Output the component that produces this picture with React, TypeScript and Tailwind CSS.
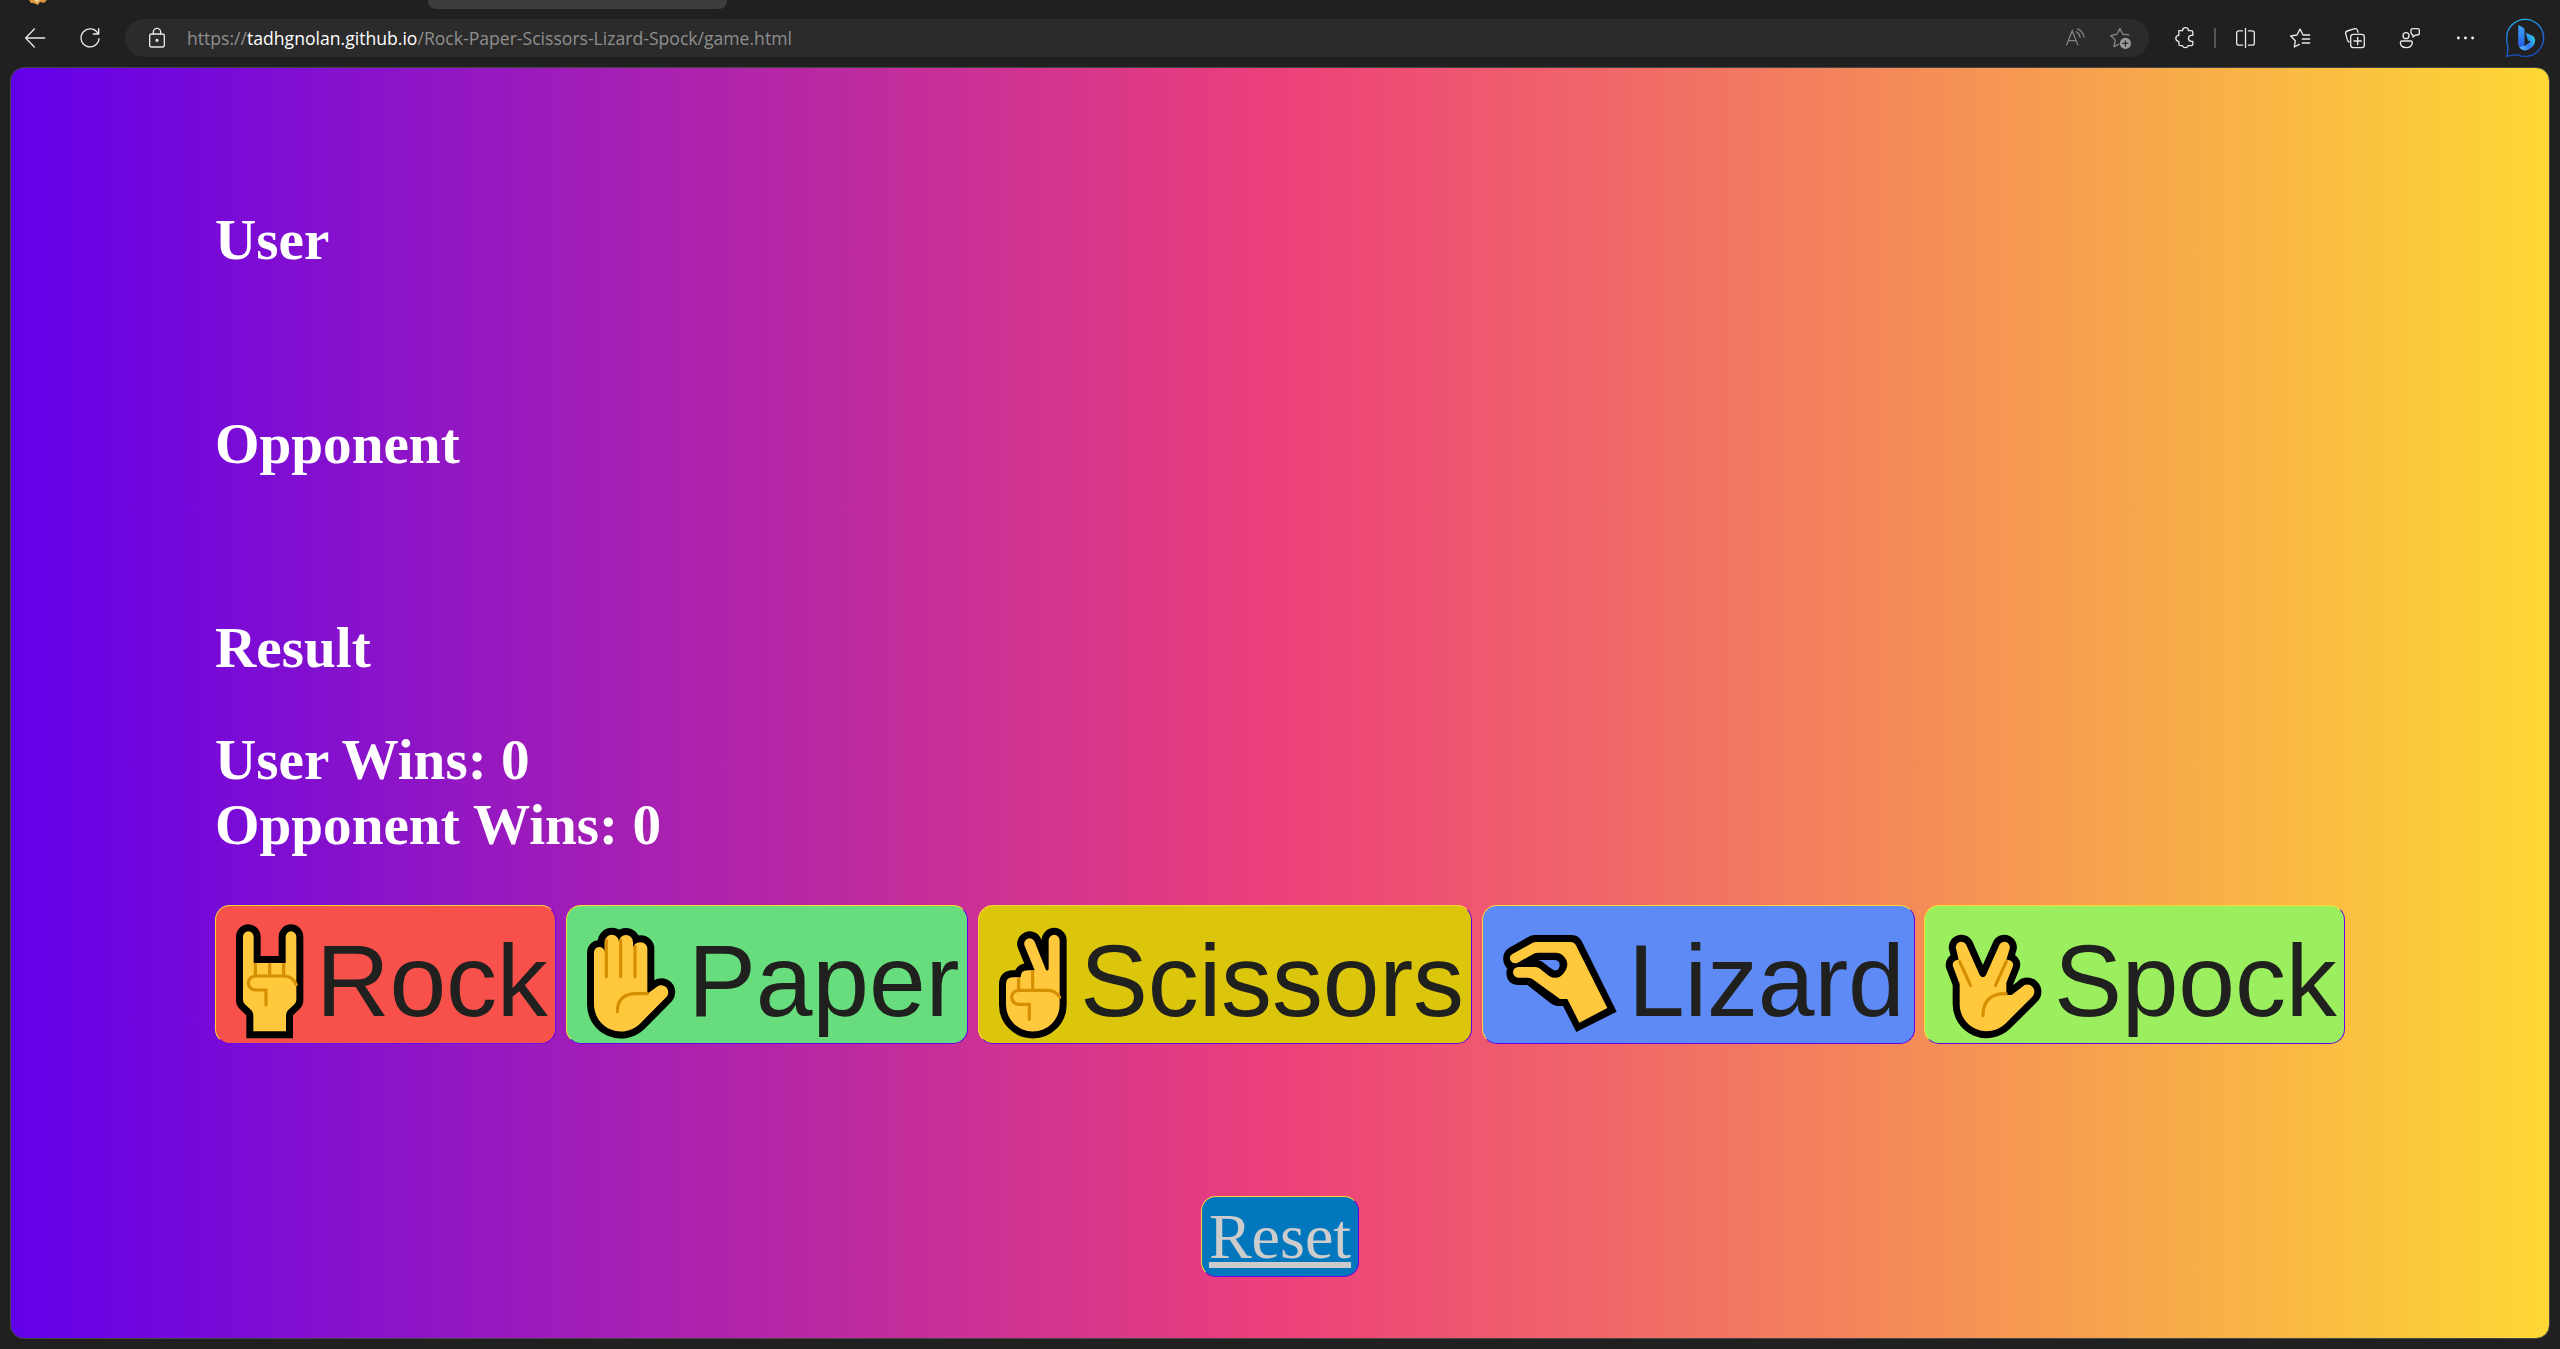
import React from "react";

type IconProps = { children: React.ReactNode; viewBox: string; className: string };

function Glyph({ children, viewBox, className }: IconProps) {
  return (
    <svg
      viewBox={viewBox}
      className={className}
      fill="none"
      stroke="#e8e8e8"
      strokeWidth="4"
      strokeLinecap="round"
      strokeLinejoin="round"
      overflow="visible"
    >
      {children}
    </svg>
  );
}

const outline = {
  fill: "#ffc83d",
  stroke: "#000",
  strokeWidth: 42,
  style: { paintOrder: "stroke" as const },
};
const crease = { fill: "none", stroke: "#d68f00", strokeWidth: 9.5, strokeLinecap: "round" as const };

function RockHand() {
  return (
    <svg viewBox="48 48 300 411" className="h-[137px] w-[100px] shrink-0 overflow-visible">
      <path
        {...outline}
        d="M129 140a16 16 0 0 1 32 0V219H257V140a16 16 0 0 1 32 0V330Q289 337 284 342L264 361Q258 367 258 375V424H160V375Q160 367 154 361L134 342Q129 337 129 330Z"
      />
      <path {...crease} strokeLinecap="butt" d="M166 220V256M209 220V256M251 220V256" />
      <path {...crease} d="M198 345V300H166a21 21 0 0 1 0-42H252Q278 259 289 284" />
    </svg>
  );
}

function PaperHand() {
  return (
    <svg viewBox="21 48 363 411" className="h-[137px] w-[121px] shrink-0 overflow-visible">
      <path
        {...outline}
        strokeLinejoin="round"
        d="M102 188a16 16 0 0 1 32-2V156a21 21 0 0 1 43 0 21 21 0 0 1 42 0V174a21 18 0 0 1 43 2V311L291 290a21 21 0 0 1 29 30L240 401A81 81 0 0 1 102 342Z"
      />
      <path {...crease} d="M139 150V260M182 150V260M225 170V260M262 311H224Q172 314 172 365" />
    </svg>
  );
}

function ScissorsHand() {
  return (
    <svg viewBox="27 48 303 411" className="h-[137px] w-[101px] shrink-0 overflow-visible">
      <path
        {...outline}
        strokeLinejoin="round"
        d="M108 282Q108 262 128 262H152Q152 241 172 241H194L164 168a16 16 0 0 1 30-13L227 238Q231 245 236 238V151a16.500 16.500 0 0 1 33 0V344A80 80 0 0 1 108 344Z"
      />
      <path {...crease} strokeLinecap="butt" d="M146 262V300M188 241V300" />
      <path {...crease} d="M178 388V343H146a21 21 0 0 1 0-42H236Q258 302 269 322" />
    </svg>
  );
}

function LizardHand() {
  return (
    <svg viewBox="39 48 435 411" className="h-[137px] w-[145px] shrink-0 overflow-visible">
      <path
        fill="#000"
        d="M115 175L176 140Q184 135 193 135H306Q325 135 335 153L440 365L319 426L279 348H262Q252 347 244 341L172 285H142Q110 282 109 249Q109 240 112 236C93 215 97 188 115 175Z"
      />
      <path
        fill="#ffc83d"
        d="M126 193L187 159Q193 156 199 156H303Q313 156 317 164L412 354L328 398L292 327H270L188 268Q182 263 174 263H145a16 16 0 0 1 0-32H195Q204 231 211 237L236 257Q262 273 281 250Q302 221 283 201Q273 188 256 188H205Q196 188 190 192L143 218Q130 223 122 212Q116 199 126 193Z"
      />
      <path
        fill="#5e8af6"
        d="M202 210H255Q269 211 269 226Q268 244 252 241L238 232L217 215Q209 210 202 210Z"
      />
    </svg>
  );
}

function SpockHand() {
  return (
    <svg viewBox="45 48 387 411" className="h-[137px] w-[129px] shrink-0 overflow-visible">
      <path
        {...outline}
        strokeLinejoin="round"
        d="M130 232C124 219 134 209 146 209L139 179a16 16 0 0 1 30-14L209 255Q219 269 228 255L268 165a16 16 0 0 1 30 14L289 209C305 209 313 219 308 231L289 278V314Q296 316 306 314L337 290a21 21 0 0 1 30 30L286 401A81 81 0 0 1 149 342V282Z"
      />
      <path {...crease} d="M149 215L182 287M289 215L256 287M288 311Q219 310 219 377" />
    </svg>
  );
}

const choices = [
  { name: "Rock", Hand: RockHand, box: "w-[341px] bg-[#f8514b]" },
  { name: "Paper", Hand: PaperHand, box: "ml-[10px] w-[402px] bg-[#68dd7d]" },
  { name: "Scissors", Hand: ScissorsHand, box: "ml-[10px] w-[494px] bg-[#dcc60b]" },
  { name: "Lizard", Hand: LizardHand, box: "ml-[10px] w-[433px] bg-[#5e8af6]" },
  { name: "Spock", Hand: SpockHand, box: "ml-[9px] w-[421px] bg-[#9bee5e]" },
];

function Toolbar() {
  return (
    <header className="flex h-[67px] flex-col overflow-hidden bg-[#202020]">
      <div className="flex h-[19px] items-start">
        <svg viewBox="0 0 20 5" className="ml-[28px] h-[5px] w-[20px]">
          <path d="M1 0H19L16 3L12 2L10 5L5 3L3 3Z" fill="#d9943c" />
          <path d="M6 0H12L9 3Z" fill="#f5d49a" />
        </svg>
        <div className="ml-[380px] h-[9px] w-[299px] rounded-b-lg bg-[#3d3d3d]" />
      </div>
      <div className="flex h-[38px] items-center">
        <Glyph viewBox="0 0 60 60" className="ml-[25px] h-[20px] w-[20px]">
          <path d="M59 30H2M28 3L2 30L28 57" />
        </Glyph>
        <Glyph viewBox="0 0 60 60" className="ml-[35px] h-[20px] w-[20px]">
          <path d="M54 17A27 27 0 1 0 57 32M56 2V18H40" />
        </Glyph>
        <div className="ml-[25px] flex h-[38px] w-[2024px] items-center rounded-full bg-[#2b2b2b]">
          <Glyph viewBox="0 0 48 60" className="ml-[24px] h-[20px] w-[16px]">
            <rect x="2" y="18" width="44" height="39" rx="6" />
            <path d="M13 18V12a11 11 0 0 1 22 0V18" />
            <circle cx="24" cy="37" r="3" fill="#e8e8e8" />
          </Glyph>
          <div className="ml-[22px] whitespace-nowrap font-['Open_Sans',sans-serif] text-[17.6px] leading-[38px] text-[#8f8f8f]">
            https://<span className="text-white">tadhgnolan.github.io</span>
            /Rock-Paper-Scissors-Lizard-Spock/game.html
          </div>
          <div className="ml-auto flex items-center gap-[25px] pr-[18px]">
            <svg viewBox="78 83 58 60" className="h-[20px] w-[19px] overflow-visible" fill="none" stroke="#858585" strokeWidth="4" strokeLinecap="round">
              <path d="M80 134L97 91L114 134M86 121H108M109 94Q119 99 121 110M113 85Q130 92 133 110" />
            </svg>
            <svg viewBox="210 83 64 64" className="h-[21px] w-[21px] overflow-visible" fill="none" stroke="#858585" strokeWidth="4" strokeLinejoin="round" strokeLinecap="round">
              <path d="M268 104L249 102L240 85L231 102L212 106L226 120L222 140L236 133" />
              <circle cx="257" cy="130" r="17" fill="#9a9a9a" stroke="none" />
              <path d="M257 122V138M249 130H265" stroke="#2b2b2b" />
            </svg>
          </div>
        </div>
        <Glyph viewBox="405 83 56 60" className="ml-[26px] h-[20px] w-[19px]">
          <path d="M416 91H427a9 9 0 0 1 18 0H453Q458 91 458 96V105H454a9 9 0 0 0 0 18H458V131Q458 136 453 136H444a9 9 0 0 1-17 0H421Q416 136 416 131V123a9 9 0 0 1 0-18V96Q416 91 416 91Z" />
        </Glyph>
        <div className="ml-[20px] h-[20px] w-[2px] bg-[#555]" />
        <Glyph viewBox="586 83 58 60" className="ml-[20px] h-[20px] w-[19px]">
          <path d="M606 91H595Q588 91 588 98V128Q588 135 595 135H606M624 91H635Q642 91 642 98V128Q642 135 635 135H624M615 84V142" />
        </Glyph>
        <Glyph viewBox="750 83 60 60" className="ml-[35px] h-[20px] w-[20px]">
          <path d="M808 104H789L780 86L771 104L752 107L766 121L763 140L778 132M787 116H809M787 128H809M793 104H809" />
        </Glyph>
        <Glyph viewBox="915 83 60 60" className="ml-[35px] h-[20px] w-[20px]">
          <path d="M927 125Q924 124 922 118L917 100Q916 94 922 92L944 85Q950 84 952 89L954 96" />
          <rect x="932" y="102" width="41" height="40" rx="8" />
          <path d="M953 111V133M942 122H964" />
        </Glyph>
        <Glyph viewBox="1080 83 60 60" className="ml-[35px] h-[20px] w-[20px]">
          <circle cx="1098" cy="106" r="9" />
          <path d="M1086 122H1112Q1117 122 1117 127Q1115 142 1099 142Q1082 142 1081 127Q1081 122 1086 122ZM1119 85H1133Q1138 85 1138 90V98Q1138 104 1132 104H1127L1119 110V104Q1113 102 1113 97V90Q1113 85 1119 85Z" />
        </Glyph>
        <svg viewBox="1250 108 50 10" className="ml-[37px] h-[4px] w-[17px] overflow-visible" fill="#f4f4f4">
          <circle cx="1254" cy="113" r="4.200" />
          <circle cx="1275" cy="113" r="4.200" />
          <circle cx="1296" cy="113" r="4.200" />
        </svg>
        <svg viewBox="1397 57 115 115" className="ml-[32px] h-[38px] w-[38px] overflow-visible">
          <defs>
            <linearGradient id="bubble" x1="0" y1="0" x2="0.300" y2="1">
              <stop offset="0" stopColor="#22c7ee" />
              <stop offset="0.400" stopColor="#2680ec" />
              <stop offset="1" stopColor="#184fc4" />
            </linearGradient>
            <linearGradient id="stem" x1="0" y1="0" x2="0" y2="1">
              <stop offset="0" stopColor="#3aa8f5" />
              <stop offset="1" stopColor="#285cec" />
            </linearGradient>
            <linearGradient id="bowl" x1="0" y1="0.700" x2="1" y2="0.200">
              <stop offset="0" stopColor="#56b4ff" />
              <stop offset="0.500" stopColor="#2f7af0" />
              <stop offset="1" stopColor="#27d8e4" />
            </linearGradient>
          </defs>
          <path d="M1399 170Q1404 155 1402 137Q1399 126 1399 114A56 56 0 1 1 1455 170Q1444 170 1434 166Q1420 164 1399 170Z" fill="none" stroke="url(#bubble)" strokeWidth="4" />
          <path d="M1456 98L1476 107Q1485 112 1485 122C1485 139 1467 152 1453 152Q1436 150 1435 132L1454 138L1472 126L1463 121Z" fill="url(#bowl)" />
          <path d="M1434 75L1448 82Q1453 85 1453 91V133Q1448 142 1441 142Q1434 140 1434 130Z" fill="url(#stem)" />
        </svg>
      </div>
    </header>
  );
}

export default function App() {
  return (
    <div className="h-[1349px] w-[2560px] overflow-hidden bg-[#202020]">
      <Toolbar />
      <main className="ml-[10px] h-[1272px] w-[2540px] overflow-hidden rounded-[14px] border border-[#474747] bg-[linear-gradient(90deg,#6200ea,#ec407a_50%,#fdd835)] pl-[204px]">
        <div className="pt-[139px] font-['Liberation_Serif',serif] text-[57.2px] leading-[65px] font-bold text-white">
          <h2>User</h2>
          <h2 className="mt-[139px]">Opponent</h2>
          <h2 className="mt-[139px]">Result</h2>
          <p className="mt-[47px]">User Wins: 0</p>
          <p>Opponent Wins: 0</p>
        </div>
        <div className="mt-[48px] flex">
          {choices.map(({ name, Hand, box }) => (
            <button
              key={name}
              className={`flex h-[139px] shrink-0 items-start rounded-[15px] border border-t-[#fdd835] border-r-[#6200ea] border-b-[#6200ea] border-l-[#fdd835] ${box}`}
            >
              <Hand />
              <span className="font-['Liberation_Sans',sans-serif] text-[102px] leading-[151px] tracking-[-0.2px] whitespace-nowrap text-[#20201e]">
                {name}
              </span>
            </button>
          ))}
        </div>
        <button className="mt-[152px] ml-[986px] flex h-[81px] w-[158px] justify-center rounded-[15px] border border-t-[#fdd835] border-r-[#6200ea] border-b-[#6200ea] border-l-[#fdd835] bg-[#0277bd] font-['Liberation_Serif',serif] text-[64px] leading-[80px] text-[#cccccc] underline">
          Reset
        </button>
      </main>
    </div>
  );
}
